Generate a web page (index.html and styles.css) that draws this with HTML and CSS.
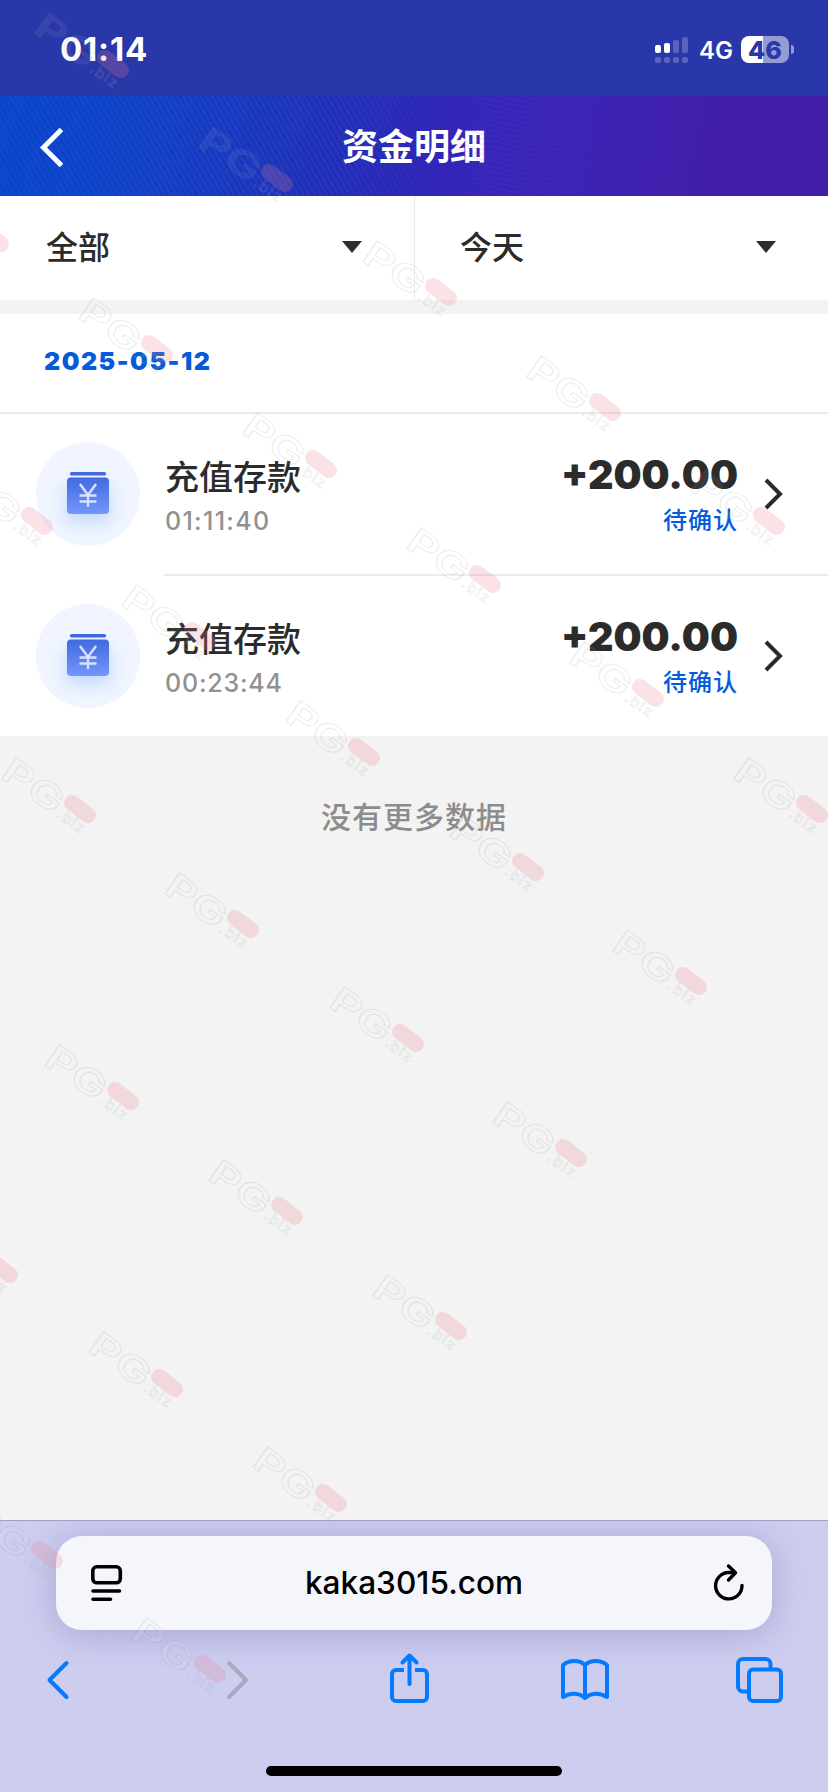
FILE: index.html
```
<!DOCTYPE html>
<html lang="zh-CN">
<head>
<meta charset="utf-8">
<title>资金明细</title>
<link rel="stylesheet" href="styles.css">
</head>
<body>
<div class="screen">
  <div class="status">
    <span class="clock">01:14</span>
    <div class="status-right">
      <svg class="signal" width="34" height="28" viewBox="0 0 34 28" fill="#fff">
        <rect x="0" y="9" width="6" height="8" rx="2"/><rect x="9" y="7" width="6" height="10" rx="2"/>
        <g opacity=".22"><rect x="18" y="4" width="6" height="13" rx="2"/><rect x="27" y="1" width="6" height="16" rx="2"/>
        <rect x="0" y="21" width="6" height="6" rx="2"/><rect x="9" y="21" width="6" height="6" rx="2"/><rect x="18" y="21" width="6" height="6" rx="2"/><rect x="27" y="21" width="6" height="6" rx="2"/></g>
      </svg>
      <span class="net">4G</span>
      <span class="battery">46</span>
      <span class="nub"></span>
    </div>
  </div>
  <header class="header">
    <svg class="header-back" width="30" height="40" viewBox="0 0 30 40" fill="none" stroke="#fff" stroke-width="5"><path d="M23.500 2.500 5.500 20.500 23.500 38.500"/></svg>
    <h1 class="title">资金明细</h1>
  </header>
  <div class="filters">
    <div class="filter"><span>全部</span><i class="caret"></i></div>
    <div class="filter"><span>今天</span><i class="caret"></i></div>
  </div>
  <div class="date">2025-05-12</div>
  <div class="row">
    <div class="coin"><svg width="104" height="104" viewBox="0 0 104 104">
      <defs>
        <linearGradient id="body" x1="0" y1="0" x2="0" y2="1"><stop offset="0" stop-color="#426ae0"/><stop offset="1" stop-color="#7396fb"/></linearGradient>
        <filter id="glow" x="-50%" y="-50%" width="200%" height="200%"><feGaussianBlur stdDeviation="8"/></filter>
      </defs>
      <rect x="29" y="43" width="46" height="38" rx="8" fill="#b4cffb" opacity=".7" filter="url(#glow)"/>
      <rect x="34" y="30" width="36" height="3.6" rx="1.6" fill="#4168dd"/>
      <rect x="31" y="35.5" width="42" height="36.5" rx="4" fill="url(#body)"/>
      <path d="M44 42 52 53 60 42M52 53V65M43.500 53.500H60.500M43.500 59.500H60.500" fill="none" stroke="#d5e1ff" stroke-width="2.400"/>
    </svg></div>
    <div class="detail">
      <div class="left"><div class="name">充值存款</div><div class="time">01:11:40</div></div>
      <div class="right"><div class="amount">+200.00</div><div class="state">待确认</div></div>
      <svg class="more" width="20" height="32" viewBox="0 0 20 32" fill="none" stroke="#2b2b2b" stroke-width="4"><path d="M2 2 16 16 2 30"/></svg>
    </div>
  </div>
  <div class="row">
    <div class="coin"><svg width="104" height="104" viewBox="0 0 104 104">
      <rect x="29" y="43" width="46" height="38" rx="8" fill="#b4cffb" opacity=".7" filter="url(#glow)"/>
      <rect x="34" y="30" width="36" height="3.6" rx="1.6" fill="#4168dd"/>
      <rect x="31" y="35.5" width="42" height="36.5" rx="4" fill="url(#body)"/>
      <path d="M44 42 52 53 60 42M52 53V65M43.500 53.500H60.500M43.500 59.500H60.500" fill="none" stroke="#d5e1ff" stroke-width="2.400"/>
    </svg></div>
    <div class="detail">
      <div class="left"><div class="name">充值存款</div><div class="time late">00:23:44</div></div>
      <div class="right"><div class="amount">+200.00</div><div class="state">待确认</div></div>
      <svg class="more" width="20" height="32" viewBox="0 0 20 32" fill="none" stroke="#2b2b2b" stroke-width="4"><path d="M2 2 16 16 2 30"/></svg>
    </div>
  </div>
  <div class="empty">没有更多数据</div>
  <footer class="browser">
    <div class="urlbar">
      <svg width="34" height="40" viewBox="0 0 34 40" fill="none" stroke="#000" stroke-width="3.6" stroke-linecap="round"><rect x="2.800" y="3.800" width="27.500" height="16" rx="4"/><path d="M3 28H29.500M3 36.300H20.500"/></svg>
      <span class="url">kaka3015.com</span>
      <svg width="32" height="40" viewBox="0 0 32 40" fill="none" stroke="#000" stroke-width="3.400" stroke-linecap="round" stroke-linejoin="round"><path d="M21 9.500H15.500A13.200 13.200 0 1 0 29 22.500"/><path d="M15.500 3 22.500 9.800 15.500 17"/></svg>
    </div>
    <nav class="tools">
      <svg width="48" height="56" viewBox="0 0 48 56"><path d="M32.500 11 15.500 28 32.500 45"/></svg>
      <svg class="off" width="48" height="56" viewBox="0 0 48 56"><path d="M19 11 36 28 19 45"/></svg>
      <svg width="48" height="56" viewBox="0 0 48 56"><path d="M19 18H11a4 4 0 0 0-4 4V45a4 4 0 0 0 4 4H38a4 4 0 0 0 4-4V22a4 4 0 0 0-4-4H30" stroke-linecap="butt"/><path d="M24.500 32V4M17.500 10.500 24.500 3.500 31.500 10.500"/></svg>
      <svg width="48" height="56" viewBox="0 0 48 56"><path d="M24 13C18 7.500 8 8 2 13V45C9 40.500 18 40.500 24 46C30 40.500 39 40.500 46 45V13C40 8 30 7.500 24 13ZM24 13V46"/></svg>
      <svg width="48" height="56" viewBox="0 0 48 56"><path d="M12 39.500H7a5 5 0 0 1-5-5V12a5 5 0 0 1 5-5H29.500a5 5 0 0 1 5 5V16"/><rect x="13" y="17.500" width="32" height="31.500" rx="4"/></svg>
    </nav>
    <div class="home"></div>
  </footer>
  <svg class="marks" width="828" height="1792" viewBox="0 0 828 1792">
    <defs>
      <g id="mark">
        <g transform="rotate(35)">
          <text class="mark-line" x="-85" y="20" font-size="35" textLength="67" lengthAdjust="spacingAndGlyphs">PG</text>
          <text class="mark-biz" x="-16" y="20" font-size="15" letter-spacing="1.500">.biz</text>
        </g>
        <rect x="-18" y="-8" width="36" height="16" rx="8" transform="rotate(37)" fill="#ec8088" fill-opacity=".22"/>
      </g>
    </defs>
    <use href="#mark" x="113" y="64"/><use href="#mark" x="277" y="178"/><use href="#mark" x="-7" y="238"/>
    <use href="#mark" x="441" y="292"/><use href="#mark" x="157" y="349"/><use href="#mark" x="605" y="407"/>
    <use href="#mark" x="321" y="464"/><use href="#mark" x="37" y="521"/><use href="#mark" x="769" y="521"/>
    <use href="#mark" x="485" y="579"/><use href="#mark" x="200" y="636"/><use href="#mark" x="648" y="693"/>
    <use href="#mark" x="364" y="752"/><use href="#mark" x="80" y="809"/><use href="#mark" x="812" y="809"/>
    <use href="#mark" x="528" y="867"/><use href="#mark" x="243" y="924"/><use href="#mark" x="691" y="981"/>
    <use href="#mark" x="408" y="1038"/><use href="#mark" x="123" y="1096"/><use href="#mark" x="571" y="1153"/>
    <use href="#mark" x="287" y="1211"/><use href="#mark" x="2" y="1269"/><use href="#mark" x="451" y="1326"/>
    <use href="#mark" x="167" y="1383"/><use href="#mark" x="331" y="1498"/><use href="#mark" x="47" y="1555"/>
    <use href="#mark" x="210" y="1669"/>
  </svg>
</div>
</body>
</html>
```
FILE: styles.css
```
* { box-sizing: border-box; }
body { margin: 0; font-family: Inter, "Noto Sans CJK SC", sans-serif; color: #2b2b2b; }
.screen { position: relative; display: flex; flex-direction: column; width: 828px; height: 1792px; overflow: hidden; background: #f3f3f3; }
.status { display: flex; justify-content: space-between; height: 96px; padding: 0 34px 0 60px; background: #2a37a9; color: #fff; }
.clock { font-size: 33px; font-weight: 700; line-height: 99px; letter-spacing: .8px; }
.status-right { display: flex; align-items: center; height: 99px; }
.signal { margin-right: 10px; }
.net { width: 34px; margin-right: 8px; font-size: 24px; font-weight: 600; line-height: 30px; padding-top: 2px; }
.battery { width: 48px; height: 27px; border-radius: 8px; background: linear-gradient(90deg, #fff 22px, #959bd4 22px); color: #2a37a9; font-size: 25px; font-weight: 800; line-height: 28px; text-align: center; }
.nub { width: 3px; height: 9px; margin-left: 2px; border-radius: 0 4px 4px 0; background: #959bd4; }
.header { position: relative; display: grid; grid-template-columns: 40px 1fr 40px; align-items: center; height: 100px; padding: 0 38px; color: #fff;
  background: linear-gradient(102deg, #0b4ad0 0%, #1446cc 18%, #2436c0 38%, #3326b9 54%, #3c24b5 68%, #411fab 84%, #411fac 100%); }
.header::before { content: ""; position: absolute; inset: 0; background: repeating-linear-gradient(60deg, rgba(5, 20, 120, .2) 0 2px, transparent 2px 5px); -webkit-mask-image: linear-gradient(90deg, rgba(0,0,0,.5), #000 40%, transparent 58%); mask-image: linear-gradient(90deg, rgba(0,0,0,.5), #000 40%, transparent 58%); }
.header::after { content: ""; position: absolute; inset: 0; background: repeating-linear-gradient(12deg, rgba(90, 70, 230, .14) 0 2px, transparent 2px 5px); -webkit-mask-image: linear-gradient(90deg, transparent 54%, #000 60%, transparent 76%); mask-image: linear-gradient(90deg, transparent 54%, #000 60%, transparent 76%); }
.header-back { position: relative; }
.title { position: relative; margin: 0; font-size: 36px; font-weight: 700; line-height: 102px; text-align: center; }
.filters { display: grid; grid-template-columns: 1fr 1fr; height: 104px; margin-bottom: 14px; background: #fff; }
.filter { display: flex; align-items: center; justify-content: space-between; padding: 0 52px 0 46px; font-size: 32px; font-weight: 500; line-height: 104px; }
.filter + .filter { border-left: 1px solid #ebebeb; padding-left: 45px; }
.caret { width: 20px; height: 12px; background: #2e2e2e; clip-path: polygon(0 0, 100% 0, 50% 100%); margin-bottom: 2px; }
.date { height: 100px; padding-left: 44px; background: #fff; border-bottom: 2px solid #ebebeb; color: #055bdb; font-size: 25px; font-weight: 900; line-height: 94px; letter-spacing: 1.5px; }
.row { display: flex; height: 162px; padding-left: 36px; background: #fff; }
.row + .row { height: 160px; }
.coin { width: 104px; height: 104px; margin: 28px 24px 0 0; border-radius: 50%; background: #f0f5ff; overflow: hidden; }
.coin svg { display: block; }
.detail { flex: 1; display: flex; align-items: flex-start; padding-right: 44px; border-bottom: 2px solid #ebebeb; }
.row + .row .detail { border-bottom: 0; }
.left { flex: 1; padding: 39px 0 0 1px; }
.name { font-size: 34px; font-weight: 500; line-height: 50px; }
.time { font-size: 25px; font-weight: 500; line-height: 36px; letter-spacing: 1.3px; color: #919191; }
.time.late { letter-spacing: .8px; }
.right { padding-top: 36px; text-align: right; }
.amount { font-size: 39.5px; font-weight: 900; line-height: 50px; }
.state { font-size: 24px; font-weight: 500; line-height: 42px; letter-spacing: 1px; color: #055bdb; }
.more { margin: 64px 0 0 26px; }
.empty { margin-top: 58px; font-size: 30px; font-weight: 500; line-height: 46px; letter-spacing: 1px; text-align: center; color: #8c8c8c; }
.browser { display: flex; flex-direction: column; align-items: center; height: 272px; margin-top: auto; padding-top: 15px; border-top: 1px solid #9ea0c2; background: #cccdef; overflow: hidden; }
.urlbar { display: flex; align-items: center; justify-content: space-between; width: 716px; height: 94px; padding: 0 27px 1px 34px; border-radius: 26px; background: #f5f6fc; box-shadow: 0 4px 34px rgba(90, 80, 150, .3); }
.url { margin-right: 9px; font-size: 31.6px; font-weight: 500; color: #000; }
.tools { display: flex; justify-content: space-between; width: 750px; height: 56px; margin: 22px 10px 0 0; fill: none; stroke: #057aff; stroke-width: 4; stroke-linecap: round; stroke-linejoin: round; }
.tools .off { stroke: #a9a9bd; }
.home { width: 296px; height: 10px; margin-top: 58px; border-radius: 5px; background: #000; }
.marks { position: absolute; inset: 0; pointer-events: none; font-family: Inter, sans-serif; }
.mark-line { font-weight: 600; fill: #fff; fill-opacity: .06; stroke: #888; stroke-opacity: .17; stroke-width: 1; }
.mark-biz { font-weight: 500; fill: #fff; fill-opacity: .1; stroke: #888; stroke-opacity: .17; stroke-width: .8; }
```
